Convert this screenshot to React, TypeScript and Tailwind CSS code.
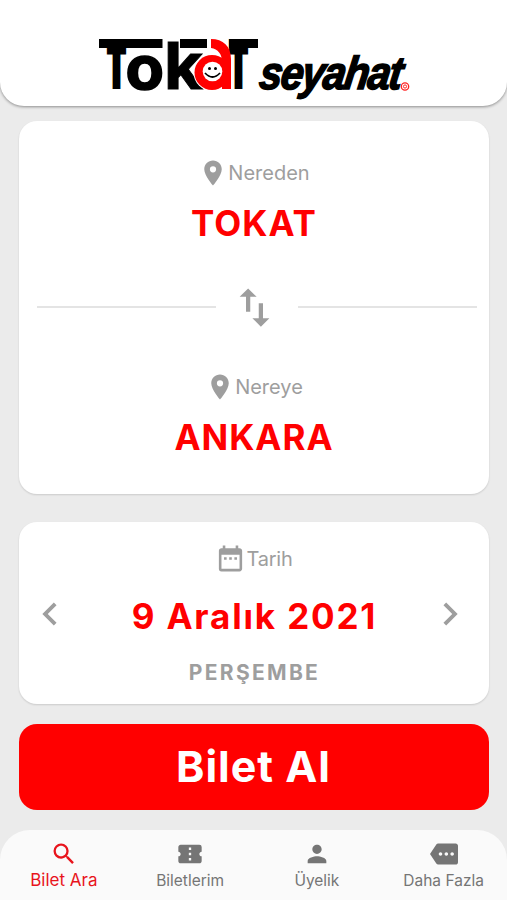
import React from 'react';
import type { IconType } from 'react-icons';
import {
  MdChevronLeft,
  MdChevronRight,
  MdConfirmationNumber,
  MdDateRange,
  MdMore,
  MdPerson,
  MdPlace,
  MdSearch,
  MdSwapVert,
} from 'react-icons/md';
import clsx from 'clsx';

const Logo: React.FC = () => (
  <svg
    width="320"
    height="70"
    viewBox="95 34 320 70"
    overflow="visible"
    role="img"
    aria-label="Tokat Seyahat"
  >
    <g fontFamily="Inter, sans-serif" fontWeight="700" fill="#000" stroke="#000">
      <text x="107.500" y="86" fontSize="60" fontWeight="900" strokeWidth="6" textLength="18" lengthAdjust="spacingAndGlyphs">T</text>
      <text x="125.500" y="88.500" fontSize="60" strokeWidth="1.600" textLength="38.500" lengthAdjust="spacingAndGlyphs">o</text>
      <text x="164" y="88.500" fontSize="64" strokeWidth="1" textLength="39" lengthAdjust="spacingAndGlyphs">k</text>
      <text x="229.500" y="86" fontSize="60" fontWeight="900" strokeWidth="6" textLength="18" lengthAdjust="spacingAndGlyphs">T</text>
    </g>
    <path d="M99 39h63.500v9H99zM180 39h27v9h-27zM229 39h29v9h-29z" fill="#000" />
    {/* kırmızı a ve gülen yüz */}
    <circle cx="212" cy="72.500" r="18.500" fill="#fff" />
    <path d="M211 39c12 0 20 7 20 20v30h-9V62c0-8-4-13-11-14z" fill="#f00" />
    <circle cx="212" cy="72.500" r="17.500" fill="#f00" />
    <circle cx="212.500" cy="71.500" r="9.800" fill="#fff" />
    <circle cx="209.500" cy="68.500" r="1.500" />
    <circle cx="215.500" cy="68.500" r="1.500" />
    <path d="M205 73q7.500 8 15 0" fill="none" stroke="#000" strokeWidth="1.800" />
    {/* seyahat */}
    <text
      x="0"
      y="0"
      transform="translate(258 88.500) skewX(-8) scale(1 1.130)"
      fontFamily="'Liberation Sans', sans-serif"
      fontWeight="700"
      fontStyle="italic"
      fontSize="41"
      stroke="#000"
      strokeWidth="1.400"
      textLength="143"
      lengthAdjust="spacing"
    >
      seyahat
    </text>
    <circle cx="405" cy="86.500" r="3.700" fill="#fff" stroke="#f22" strokeWidth="1.300" />
    <circle cx="405" cy="86.500" r="1.600" fill="none" stroke="#f22" strokeWidth="1" />
  </svg>
);

type StopProps = {
  label: string;
  city: string;
};

const Stop: React.FC<StopProps> = ({ label, city }) => (
  <button className="flex w-full flex-col items-center">
    <span className="flex h-[30px] items-center pl-[1px] text-[20px] text-[#9e9e9e]">
      <MdPlace className="size-[30px]" />
      {label}
    </span>
    <span className="mt-[14px] pl-[1px] text-[35px] leading-[42px] font-bold tracking-[1px] text-[#f00]">
      {city}
    </span>
  </button>
);

type Tab = {
  label: string;
  icon: IconType;
};

const TABS: Tab[] = [
  { label: 'Bilet Ara', icon: MdSearch },
  { label: 'Biletlerim', icon: MdConfirmationNumber },
  { label: 'Üyelik', icon: MdPerson },
  { label: 'Daha Fazla', icon: MdMore },
];

export default function App() {
  const [activeTab, setActiveTab] = React.useState('Bilet Ara');
  const [stops, setStops] = React.useState(['TOKAT', 'ANKARA']);

  return (
    <div className="flex h-[900px] w-full flex-col overflow-hidden bg-[#ebebeb] font-['Inter',sans-serif]">
      <header className="flex h-[106px] shrink-0 justify-center rounded-b-[24px] bg-white pt-[34px] pl-[3px] shadow-[0_1px_3px_rgba(0,0,0,0.4)]">
        <Logo />
      </header>

      <main className="flex flex-1 flex-col px-[18.5px] pt-[15px]">
        {/* güzergah */}
        <section className="flex h-[373px] flex-col rounded-[18px] bg-white px-[18px] pt-[37px] shadow-[0_1px_2px_rgba(0,0,0,0.14)]">
          <Stop label="Nereden" city={stops[0]} />
          <div className="-mr-[6px] mt-[37px] mb-[39px] flex h-[52px] items-center">
            <div className="h-[1.5px] flex-1 bg-[#e4e4e4]" />
            <button
              className="mr-[18px] ml-[13px]"
              onClick={() => setStops([stops[1], stops[0]])}
            >
              <MdSwapVert className="size-[51px] text-[#9e9e9e]" />
            </button>
            <div className="h-[1.5px] flex-1 bg-[#e4e4e4]" />
          </div>
          <Stop label="Nereye" city={stops[1]} />
        </section>

        {/* tarih */}
        <section className="mt-[28px] flex h-[182px] flex-col items-center rounded-[18px] bg-white pt-[21px] shadow-[0_1px_2px_rgba(0,0,0,0.14)]">
          <span className="flex h-[31px] items-center pl-[1px] text-[20px] tracking-[-0.2px] text-[#9e9e9e]">
            <MdDateRange className="size-[31px]" />
            Tarih
          </span>
          <div className="mt-[17px] flex h-[46px] w-full items-center pr-[16px] pl-[8px] text-[#9e9e9e]">
            <MdChevronLeft className="size-[46px]" />
            <span className="flex-1 pt-[5px] pl-[10px] text-center text-[35px] font-bold tracking-[1.85px] text-[#f00]">
              9 Aralık 2021
            </span>
            <MdChevronRight className="size-[46px]" />
          </div>
          <span className="mt-[20.5px] pl-[2px] text-[21px] leading-[30px] font-bold tracking-[2.3px] text-[#9e9e9e]">
            PERŞEMBE
          </span>
        </section>

        <button className="mt-[20px] h-[86px] rounded-[18px] bg-[#f00] pb-[2px] text-[43px] font-bold tracking-[1px] text-white">
          Bilet Al
        </button>
      </main>

      <nav className="grid h-[70px] shrink-0 grid-cols-4 rounded-t-[30px] bg-[#fafafa]">
        {TABS.map(({ label, icon: Icon }) => (
          <button
            key={label}
            onClick={() => setActiveTab(label)}
            className={clsx(
              'flex flex-col items-center pt-[10px]',
              activeTab === label
                ? 'pl-[1px] text-[17px] text-[#e8141c]'
                : 'text-[15.5px] text-[#757575]'
            )}
          >
            <Icon className="size-[28px]" />
            <span
              className={clsx(
                'whitespace-nowrap',
                activeTab === label ? 'leading-[24px]' : 'leading-[26px]'
              )}
            >
              {label}
            </span>
          </button>
        ))}
      </nav>
    </div>
  );
}
